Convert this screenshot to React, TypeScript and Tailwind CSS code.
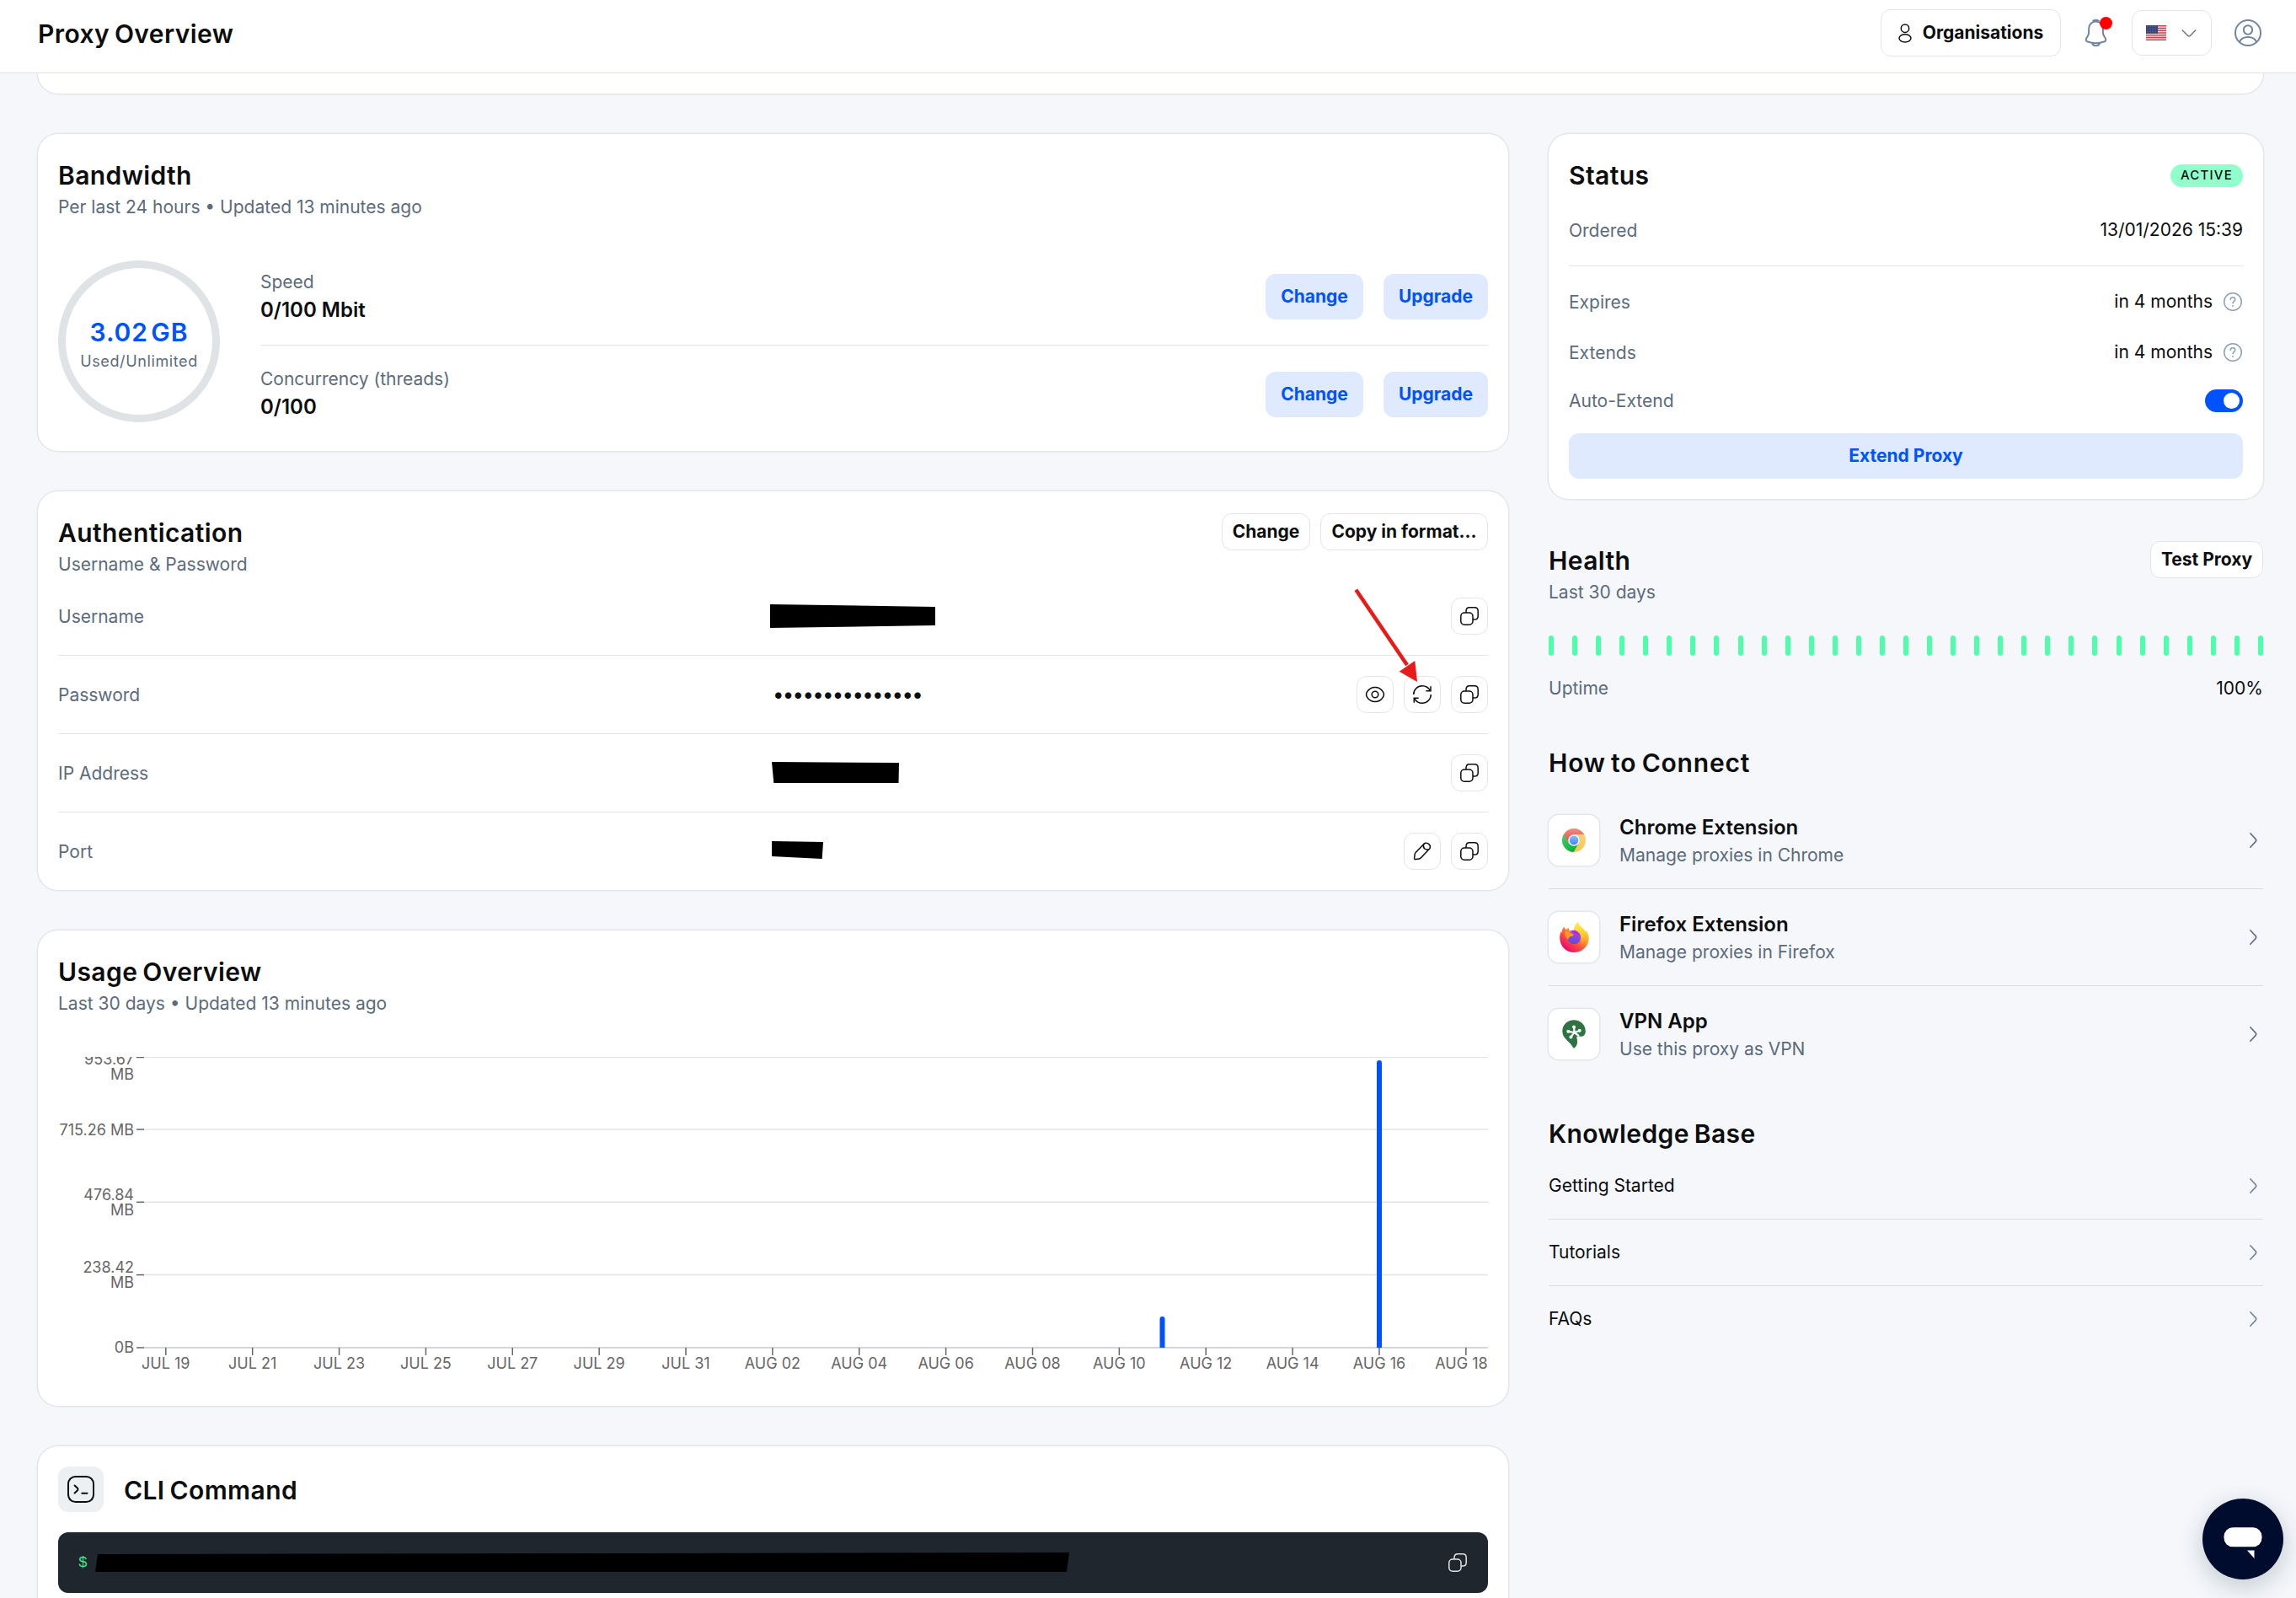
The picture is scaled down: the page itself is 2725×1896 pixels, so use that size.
import { ReactNode } from 'react';
import clsx from 'clsx';

const USAGE_DAYS = ['JUL 19','JUL 21','JUL 23','JUL 25','JUL 27','JUL 29','JUL 31','AUG 02','AUG 04','AUG 06','AUG 08','AUG 10','AUG 12','AUG 14','AUG 16','AUG 18'];
const GRID_LINES = [0.5, 86.1, 172.3, 258.6];
const ARTICLES = ['Getting Started', 'Tutorials', 'FAQs'];

function CopyIcon() {
  return (
    <svg width="24" height="24" viewBox="0 0 24 24" fill="none" stroke="currentColor" strokeWidth="1.5">
      <rect x="1.8" y="8" width="14.2" height="14.2" rx="4.2" />
      <path d="M8 8V6.2C8 3.2 9.2 1.8 12 1.8h6c2.8 0 4.2 1.4 4.2 4.2v6c0 2.8-1.4 4.1-4.2 4.1h-2" />
    </svg>
  );
}

function EyeIcon() {
  return (
    <svg width="24" height="24" viewBox="0 0 24 24" fill="none" stroke="currentColor" strokeWidth="1.5">
      <path d="M2.5 8.9C7 1.600 17 1.600 21.500 8.900c1.300 2.200 1.300 4 0 6.200-4.500 7.300-14.500 7.300-19 0-1.300-2.200-1.300-4 0-6.200z" />
      <circle cx="12" cy="12" r="3.8" />
    </svg>
  );
}

function RefreshIcon() {
  return (
    <svg width="24" height="24" viewBox="0 0 24 24" fill="none" stroke="currentColor" strokeWidth="1.5">
      <path d="M1.7 12C1.7 6.3 6.3 1.8 12 1.8c4.1 0 7.6 2.3 9.5 5.9" />
      <path d="M22 2.3v5.400h-5.600" />
      <path d="M22.3 12c0 5.7-4.6 10.2-10.3 10.2-4.1 0-7.6-2.3-9.5-5.9" />
      <path d="M2.3 21.7v-5.400h5.400" />
    </svg>
  );
}

function PencilIcon() {
  return (
    <svg width="24" height="24" viewBox="0 0 24 24" fill="none" stroke="currentColor" strokeWidth="1.5" strokeLinejoin="round">
      <path d="M13.800 3.400 4.200 13.500c-.5.600-.9 1.300-1 2l-.6 4.400c-.2 1.200.5 1.900 1.600 1.700l4.200-.7c.8-.1 1.500-.5 2-1.100L20.200 9.600c1.600-1.900 1.500-4.300-.3-6-1.800-1.800-4.300-2-6.100-.2z" />
      <path d="M13.800 3.700c-1.600 4.200 1.500 7.500 6.200 6" />
    </svg>
  );
}

function ChevronRight({ className }: { className?: string }) {
  return (
    <svg width="12" height="20" viewBox="0 0 12 20" fill="none" stroke="currentColor" strokeWidth="1.6" strokeLinecap="round" className={className}>
      <path d="m1.800 1.800 6.200 6.600c.9 1 .9 2.200 0 3.200l-6.200 6.600" />
    </svg>
  );
}

function HelpIcon() {
  return (
    <svg width="24" height="24" viewBox="0 0 24 24" fill="none" stroke="#8fa0b1" strokeWidth="1.5" strokeLinecap="round">
      <circle cx="12" cy="12" r="10.3" />
      <path d="M9.200 9.500c.1-1.600 1.200-2.700 2.800-2.700s2.800 1.100 2.800 2.500c0 2-2.800 2.300-2.800 4.500" />
      <path d="M12 16.800v.2" strokeWidth="1.8" />
    </svg>
  );
}

function ChromeLogo() {
  return (
    <svg width="28" height="28" viewBox="0 0 28 28">
      <defs>
        <linearGradient id="cr" x1="0" y1="0" x2="0" y2="1"><stop stopColor="#f08c82" /><stop offset="1" stopColor="#e5493f" /></linearGradient>
        <linearGradient id="cg" x1="0" y1="0" x2="1" y2="1"><stop stopColor="#3fce78" /><stop offset="1" stopColor="#00a82d" /></linearGradient>
        <linearGradient id="cy" x1="1" y1="0" x2="0" y2="1"><stop stopColor="#f3d489" /><stop offset="1" stopColor="#f7c233" /></linearGradient>
        <linearGradient id="cb" x1="0" y1="0" x2="0" y2="1"><stop stopColor="#86bcfb" /><stop offset="1" stopColor="#3d87fb" /></linearGradient>
      </defs>
      <circle cx="14" cy="14" r="14" fill="url(#cy)" />
      <path d="M14 14 8.200 17.700 1.900 7A14 14 0 0 0 13.600 28l6.300-11z" fill="url(#cg)" />
      <path d="M1.900 7A14 14 0 0 1 26.100 7H14L8 17.300z" fill="url(#cr)" />
      <circle cx="14" cy="14" r="6.8" fill="#fff" />
      <circle cx="14" cy="14" r="5.400" fill="url(#cb)" />
    </svg>
  );
}

function FirefoxLogo() {
  return (
    <svg width="35" height="36" viewBox="0 0 35 36">
      <defs>
        <linearGradient id="ff" x1=".85" y1=".1" x2=".2" y2=".95">
          <stop stopColor="#ffef3e" /><stop offset=".35" stopColor="#ffa02b" /><stop offset=".65" stopColor="#ff4a40" /><stop offset="1" stopColor="#e6007a" />
        </linearGradient>
        <linearGradient id="fy" x1=".5" y1="0" x2=".6" y2="1"><stop stopColor="#fff04a" /><stop offset=".6" stopColor="#ffc52e" /><stop offset="1" stopColor="#ff8a2a" stopOpacity=".2" /></linearGradient>
        <linearGradient id="fp" x1=".7" y1="0" x2=".4" y2="1"><stop stopColor="#c531f0" /><stop offset=".6" stopColor="#7a4ae0" /><stop offset="1" stopColor="#4d55d0" /></linearGradient>
      </defs>
      <path d="M5.500 5.500c.3 1.500.9 2.600 1.800 3.600C8.500 8 9.800 7.200 11 6.900c-.2 1.300.2 2.400.9 3.400 2-.4 3.900-.4 5.400.2-.3-4 .9-7.500 4.800-10.500.8 4.200 3.700 5.700 6.300 8.600 1.300 1.400 2 2.400 2.400 3.700.3-.9.400-1.700.3-2.500 2.400 3.100 3.700 6.400 3.700 9.500C34.800 28.500 27 36 17.500 36 7.500 36 .2 28.500.2 18.700c0-3 .5-5.400 1.800-7.700.1.700.3 1.200.6 1.700.1-3 1-5.200 2.900-7.200z" fill="url(#ff)" />
      <path d="M17.500 10.500C17 6.500 18.500 3 22.100 0c.8 4.200 3.700 5.700 6.300 8.600 4 5.200 3 15.500-3.900 19.900 2-4.500 1.500-12-1.500-15z" fill="url(#fy)" />
      <circle cx="17.300" cy="18.700" r="7.600" fill="url(#fp)" />
      <path d="M12.800 10.300c2-1 6.300-1 8.700 1.100 2.600 2.200 3.500 4.500 3.200 6.600-1.200-3-3.500-4-5.700-4.300z" fill="#a42ee0" />
      <path d="M7.300 10c2 2.300 5 2.700 7.400 3.400 1.300.4 2.100 1.100 1.800 2-.4 1.100-3.400 1.500-4.400 2.100-.9.600-1.500 1.600-1.700 3C7 19 5 14 7.300 10z" fill="#ff9c1f" />
    </svg>
  );
}

function VpnLogo() {
  return (
    <svg width="28" height="34" viewBox="0 0 28 34">
      <path d="M14 .3c7.900 0 13.800 5.800 13.800 13.200 0 4.200-2.300 6.300-5.600 6.300-2.200 0-3.900-.6-4.700.3-.8 1 .6 2.700.6 5.600 0 3.300-1.200 6-3.800 8-1.100-.6-1.800-1.800-3-3.500C7.600 25 .3 21.400.3 13.500.3 6.100 6.100.3 14 .3z" fill="#2f7343" />
      <g stroke="#fff" strokeWidth="2.200" strokeLinecap="round" fill="#fff">
        <path d="M14.300 15V8.800M14.300 15l-7-1.200M14.300 15l6.500-2M14.300 15l-4 5.800M14.300 15l5 3.500" />
        <circle cx="14" cy="8.600" r=".9" /><circle cx="7.300" cy="13.700" r=".9" /><circle cx="20.700" cy="12.800" r=".9" /><circle cx="10.400" cy="20.600" r=".9" />
      </g>
    </svg>
  );
}

function UsFlag() {
  return (
    <svg width="24" height="18" viewBox="0 0 24 18">
      <rect width="24" height="18" fill="#f3dcdd" />
      {[0, 1, 2, 3, 4, 5, 6].map(i => (
        <rect key={i} y={i * 2.77} width="24" height="1.385" fill="#cb3b45" />
      ))}
      <rect width="14" height="9.7" fill="#34437a" />
      {[1.5, 3.5, 5.5, 7.5].map(y => (
        <path key={y} d={`M1 ${y}h12`} stroke="#7d88ad" strokeWidth=".6" strokeDasharray=".8 1.2" />
      ))}
    </svg>
  );
}

function Title({ children, className }: { children: ReactNode; className?: string }) {
  return <h2 className={clsx('text-[30px] leading-9 font-semibold tracking-[0.4px] text-[#0b0d0e] [word-spacing:-2px]', className)}>{children}</h2>;
}

function Card({ children, className }: { children: ReactNode; className?: string }) {
  return <section className={clsx('rounded-[24px] bg-white px-6 shadow-[0_0_0_1.5px_#e3e6eb]', className)}>{children}</section>;
}

function SoftButton({ children, className }: { children: ReactNode; className?: string }) {
  return (
    <button className={clsx('h-[54px] rounded-xl bg-[#dfe9ff] text-[21px] font-bold text-[#0052ff]', className)}>{children}</button>
  );
}

function OutlineButton({ children, className }: { children: ReactNode; className?: string }) {
  return (
    <button className={clsx('h-11 rounded-xl border border-[#e3e5e8] bg-white text-[21px] font-bold whitespace-nowrap text-[#0b0d0e]', className)}>{children}</button>
  );
}

function IconButton({ children }: { children: ReactNode }) {
  return (
    <button className="flex size-11 items-center justify-center rounded-xl border border-[#e3e5e8] bg-white text-[#0b0d0e]">{children}</button>
  );
}

function Limit({ label, value }: { label: string; value: string }) {
  return (
    <div className="flex h-[115px] items-center justify-between">
      <div className="pb-[3px] leading-[33px]">
        <p className="text-[#5b6b7c]">{label}</p>
        <p className="text-2xl leading-[33px] font-semibold">{value}</p>
      </div>
      <div className="flex gap-6">
        <SoftButton className="w-[116px]">Change</SoftButton>
        <SoftButton className="w-[124px]">Upgrade</SoftButton>
      </div>
    </div>
  );
}

function Credential({ label, value, children }: { label: string; value: ReactNode; children: ReactNode }) {
  return (
    <div className="flex h-[93px] items-center border-b border-[#e2e4e8] last:h-[92px] last:border-b-0">
      <p className="w-[845px] pt-0.5 text-[#5b6b7c]">{label}</p>
      <div className="flex-1">{value}</div>
      <div className="flex gap-3">{children}</div>
    </div>
  );
}

function StatusRow({ label, children, className }: { label: string; children: ReactNode; className?: string }) {
  return (
    <div className={clsx('flex items-center justify-between', className)}>
      <span className="pt-0.5 text-[#5b6b7c]">{label}</span>
      <span className="flex items-center gap-3">{children}</span>
    </div>
  );
}

function ConnectLink({ icon, title, text }: { icon: ReactNode; title: string; text: string }) {
  return (
    <a className="flex h-[115px] items-center border-b border-[#d9dce1] last:h-[114px] last:border-b-0">
      <span className="flex size-[60px] items-center justify-center rounded-xl bg-white shadow-[0_0_0_1.5px_#e3e6eb]">{icon}</span>
      <span className="ml-6 flex-1 pt-0.5 leading-[33px]">
        <span className="block text-2xl leading-[33px] font-semibold">{title}</span>
        <span className="block text-[#5b6b7c]">{text}</span>
      </span>
      <ChevronRight className="mr-[5px] text-[#5d6f82]" />
    </a>
  );
}

function UsageChart() {
  return (
    <svg width="1697" height="376" viewBox="0 0 1697 376" className="mt-12 block" fontSize="18" fill="#666">
      {GRID_LINES.map(y => (
        <g key={y}>
          <path d={`M102 ${y}H1697`} stroke="#e2e4e8" strokeWidth="1.5" />
          <path d={`M93 ${y}h9`} stroke="#666" strokeWidth="1.5" />
        </g>
      ))}
      <path d="M102 345H1697" stroke="#d4d6da" strokeWidth="2" />
      <path d="M93 345h9" stroke="#666" strokeWidth="1.5" />
      <g textAnchor="end">
        <text x="90" y="9">953.67</text>
        <text x="90" y="27">MB</text>
        <text x="90" y="93">715.26 MB</text>
        <text x="90" y="170">476.84</text>
        <text x="90" y="188">MB</text>
        <text x="90" y="256">238.42</text>
        <text x="90" y="274">MB</text>
        <text x="90" y="351">0B</text>
      </g>
      {USAGE_DAYS.map((day, i) => (
        <g key={day}>
          <path d={`M${127.8 + i * 102.87} 345v9`} stroke="#666" strokeWidth="1.5" />
          <text x={i === 15 ? 1665.5 : 127.8 + i * 102.87} y="370" textAnchor="middle">{day}</text>
        </g>
      ))}
      <path d="M1307.500 345v-34a3 3 0 0 1 6 0v34z" fill="#0052ff" />
      <path d="M1565 345V7a3 3 0 0 1 6 0v338z" fill="#0052ff" />
    </svg>
  );
}

function Header() {
  return (
    <header className="flex h-[87px] items-center justify-between border-b border-[#e0e3e8] bg-white pr-[41px] pb-2 pl-[45px]">
      <Title className="pt-0.5">Proxy Overview</Title>
      <div className="flex items-center">
        <button className="flex h-14 w-[214px] items-center justify-center gap-[13px] rounded-xl border border-[#e3e5e8] text-[21px] font-bold">
          <svg width="16" height="23" viewBox="0 0 16 23" fill="none" stroke="currentColor" strokeWidth="1.5">
            <circle cx="8" cy="5.7" r="4.7" />
            <ellipse cx="8" cy="17.3" rx="7" ry="4.6" />
          </svg>
          Organisations
        </button>
        <div className="relative ml-[27px]">
          <svg width="30" height="34" viewBox="0 0 30 34" fill="none" stroke="#71869d" strokeWidth="2">
            <path d="M14.500 3.500c-5 0-8.400 3.800-8.400 8.500v4.300c0 1.400-.4 2.900-1.100 4.100l-1.800 3c-1 1.700-.3 3.500 1.500 4.100 6.300 2.100 13.300 2.100 19.600 0 1.800-.6 2.500-2.400 1.500-4.100l-1.800-3c-.7-1.200-1.100-2.700-1.100-4.100V12c0-4.700-3.500-8.500-8.400-8.500z" />
            <path d="M11 3.600c1-2.300 6-2.300 7 0" strokeWidth="2.5" />
            <path d="M9.900 28.500c.7 4.900 8.500 4.900 9.200 0" />
          </svg>
          <span className="absolute -top-0.5 -right-1 size-[15px] rounded-full bg-[#ff0000]" />
        </div>
        <button className="ml-[27px] flex h-[54px] w-[95px] items-center justify-between rounded-xl border border-[#e3e5e8] pr-[17px] pl-4">
          <UsFlag />
          <svg width="18" height="11" viewBox="0 0 18 11" fill="none" stroke="#71777e" strokeWidth="1.5">
            <path d="m.8 1.500 6.700 6.700c.9.900 2.100.9 3 0l6.700-6.700" />
          </svg>
        </button>
        <svg width="32" height="32" viewBox="0 0 32 32" fill="none" stroke="#71869d" strokeWidth="2" className="ml-[27px]">
          <circle cx="16" cy="16" r="15" />
          <circle cx="16" cy="12.5" r="5.200" />
          <path d="M6 27c1.200-3.800 5.200-6 10-6s8.800 2.200 10 6" />
        </svg>
      </div>
    </header>
  );
}

export default function App() {
  return (
    <div className="relative h-[1896px] w-[2725px] overflow-hidden bg-[#f5f7fb] font-['Inter',sans-serif] text-[21px] text-[#0b0d0e]">
      <Header />
      <main className="pr-[39px] pl-[45px]">
        <div className="h-6 rounded-b-[24px] bg-white shadow-[0_0_0_1.5px_#e3e6eb] [clip-path:inset(0_-3px_-3px_-3px)]" />
        <div className="mt-12 flex items-start gap-12">
          <div className="flex w-[1745px] flex-col gap-12">
            <Card className="h-[376px] pt-[31px]">
              <Title>Bandwidth</Title>
              <p className="mt-[5px] leading-[30px] text-[#5b6b7c]">Per last 24 hours • Updated 13 minutes ago</p>
              <div className="mt-[35px] flex">
                <div className="mt-[13px] flex size-48 flex-col items-center rounded-full border-[9px] border-[#dfe3e6] pt-[58px]">
                  <p className="text-[30px] leading-9 font-semibold tracking-[0.9px] text-[#0052ff] [word-spacing:-5px]">3.02 GB</p>
                  <p className="text-lg leading-[34px] tracking-[0.62px] text-[#5b6b7c]">Used/Unlimited</p>
                </div>
                <div className="-mt-px ml-12 flex-1 divide-y divide-[#e2e4e8]">
                  <Limit label="Speed" value="0/100 Mbit" />
                  <Limit label="Concurrency (threads)" value="0/100" />
                </div>
              </div>
            </Card>

            <Card className="h-[473px] pt-[26px]">
              <div className="flex h-[76px] justify-between">
                <div className="pt-[5px]">
                  <Title>Authentication</Title>
                  <p className="mt-[5px] leading-[30px] text-[#5b6b7c]">Username &amp; Password</p>
                </div>
                <div className="flex gap-3">
                  <OutlineButton className="w-[105px]">Change</OutlineButton>
                  <OutlineButton className="w-[199px]">Copy in format...</OutlineButton>
                </div>
              </div>
              <Credential
                label="Username"
                value={<svg width="197" height="28" viewBox="0 0 197 28"><path d="M0 0 196 3v22L0 28z" /></svg>}
              >
                <IconButton><CopyIcon /></IconButton>
              </Credential>
              <Credential label="Password" value={<p className="pl-[3px] text-2xl tracking-[-1.7px]">•••••••••••••••</p>}>
                <IconButton><EyeIcon /></IconButton>
                <IconButton><RefreshIcon /></IconButton>
                <IconButton><CopyIcon /></IconButton>
              </Credential>
              <Credential
                label="IP Address"
                value={<svg width="153" height="27" viewBox="0 0 153 27"><path d="M2 0 153 1l-.5 24H4.300z" /></svg>}
              >
                <IconButton><CopyIcon /></IconButton>
              </Credential>
              <Credential
                label="Port"
                value={<svg width="64" height="24" viewBox="0 0 64 24"><path d="M2 0 63 1 61.700 21 2 18z" /></svg>}
              >
                <IconButton><PencilIcon /></IconButton>
                <IconButton><CopyIcon /></IconButton>
              </Credential>
            </Card>

            <Card className="h-[564px] pt-[31px]">
              <Title>Usage Overview</Title>
              <p className="mt-[5px] leading-[30px] text-[#5b6b7c]">Last 30 days • Updated 13 minutes ago</p>
              <UsageChart />
            </Card>

            <Card className="h-[240px] pt-6">
              <div className="flex items-center gap-6">
                <span className="flex size-[54px] items-center justify-center rounded-xl bg-[#edf0f3]">
                  <svg width="34" height="34" viewBox="0 0 34 34" fill="none" stroke="currentColor" strokeWidth="2" strokeLinecap="round">
                    <rect x="2" y="2" width="30" height="30" rx="8.5" />
                    <path d="m9.600 12.500 3.200 3c.9.900.9 2.100 0 3l-3.200 3M18.300 21.700h6.200" />
                  </svg>
                </span>
                <Title className="pt-0.5">CLI Command</Title>
              </div>
              <div className="mt-6 flex h-[72px] items-center rounded-xl bg-[#20262e] px-6 font-['Liberation_Mono',monospace] text-lg">
                <span className="w-5 text-[#3ee58f]">$</span>
                <svg width="1156" height="24" viewBox="0 0 1156 24"><path d="M3 2 1156 0l-3 23H0z" /></svg>
                <span className="ml-auto text-[#dfe3e6]"><CopyIcon /></span>
              </div>
            </Card>
          </div>

          <div className="w-[848px]">
            <Card className="h-[433px] pt-[31px]">
              <div className="flex items-center justify-between">
                <Title>Status</Title>
                <span className="flex h-[27px] w-[86px] items-center justify-center rounded-full bg-[#90ffcc] text-[15px] font-medium tracking-[1.2px]">ACTIVE</span>
              </div>
              <StatusRow label="Ordered" className="mt-[5px] h-[85px] border-b border-[#e2e4e8]">13/01/2026 15:39</StatusRow>
              <StatusRow label="Expires" className="mt-[12px] h-[60px]">in 4 months <HelpIcon /></StatusRow>
              <StatusRow label="Extends" className="h-[60px]">in 4 months <HelpIcon /></StatusRow>
              <StatusRow label="Auto-Extend" className="h-[54px]">
                <span className="flex h-[27px] w-[45px] items-center justify-end rounded-full bg-[#0052ff] pr-1">
                  <span className="size-[19px] rounded-full bg-white" />
                </span>
              </StatusRow>
              <SoftButton className="mt-3 w-full">Extend Proxy</SoftButton>
            </Card>

            <div className="mt-[50px] flex justify-between">
              <div className="pt-[5px]">
                <Title>Health</Title>
                <p className="mt-[5px] leading-[30px] text-[#5b6b7c]">Last 30 days</p>
              </div>
              <OutlineButton className="w-[134px]">Test Proxy</OutlineButton>
            </div>
            <div className="mt-9 flex justify-between">
              {Array.from({ length: 31 }, (_, i) => (
                <span key={i} className="h-6 w-1.5 rounded-[3px] bg-[#4dffaa]" />
              ))}
            </div>
            <div className="mt-6 flex justify-between leading-[30px]">
              <span className="text-[#5b6b7c]">Uptime</span>
              <span>100%</span>
            </div>

            <Title className="mt-[55px] tracking-[0.8px]">How to Connect</Title>
            <div className="mt-[17px]">
              <ConnectLink icon={<ChromeLogo />} title="Chrome Extension" text="Manage proxies in Chrome" />
              <ConnectLink icon={<FirefoxLogo />} title="Firefox Extension" text="Manage proxies in Firefox" />
              <ConnectLink icon={<VpnLogo />} title="VPN App" text="Use this proxy as VPN" />
            </div>

            <Title className="mt-[43px]">Knowledge Base</Title>
            <div className="mt-[5px]">
              {ARTICLES.map(a => (
                <a key={a} className="flex h-[79px] items-center justify-between border-b border-[#d9dce1] last:h-[78px] last:border-b-0">
                  {a}
                  <ChevronRight className="mr-[5px] text-[#71869d]" />
                </a>
              ))}
            </div>
          </div>
        </div>
      </main>

      {/* callout pointing at the password refresh button */}
      <svg width="90" height="120" viewBox="0 0 90 120" className="absolute top-[695px] left-[1600px]">
        <path d="M9.300 4.700 70 94" stroke="#e81b1b" strokeWidth="4.5" />
        <path d="M82 114 60.700 101.700 79.300 89z" fill="#e81b1b" />
      </svg>

      <button className="absolute top-[1778px] left-[2614px] size-24 rounded-full bg-[#000c2e] shadow-[0_8px_30px_rgba(0,40,50,0.22)]">
        <svg width="96" height="96" viewBox="0 0 96 96" fill="#fff">
          <rect x="25.5" y="34.3" width="45" height="23" rx="10.5" />
          <path d="M53 61.500h8.500v9.500z" />
        </svg>
      </button>
    </div>
  );
}
